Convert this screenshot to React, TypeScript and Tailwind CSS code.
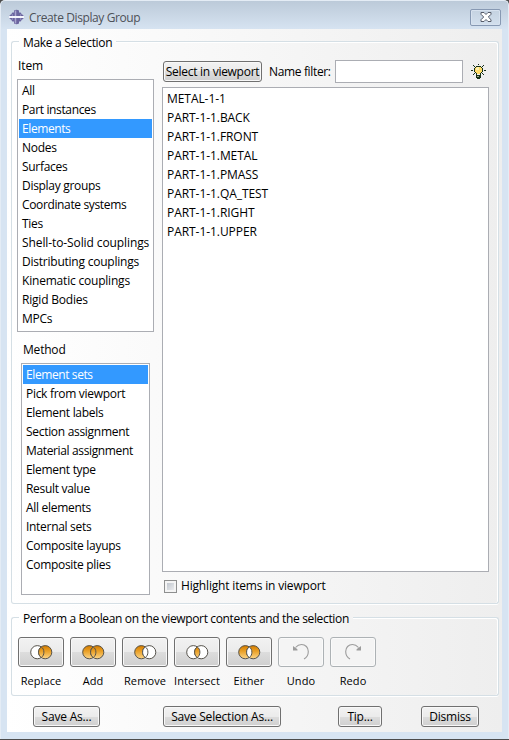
import type { ReactNode } from "react";

const items = [
  "All", "Part instances", "Elements", "Nodes", "Surfaces", "Display groups", "Coordinate systems",
  "Ties", "Shell-to-Solid couplings", "Distributing couplings", "Kinematic couplings", "Rigid Bodies", "MPCs",
];
const methods = [
  "Element sets", "Pick from viewport", "Element labels", "Section assignment", "Material assignment",
  "Element type", "Result value", "All elements", "Internal sets", "Composite layups", "Composite plies",
];
const sets = [
  "METAL-1-1", "PART-1-1.BACK", "PART-1-1.FRONT", "PART-1-1.METAL", "PART-1-1.PMASS",
  "PART-1-1.QA_TEST", "PART-1-1.RIGHT", "PART-1-1.UPPER",
];

const tracking: Record<string, string> = {
  "Shell-to-Solid couplings": "tracking-[-0.1px]",
  "Kinematic couplings": "tracking-[-0.2px]",
  "Distributing couplings": "tracking-[-0.23px]",
  "Coordinate systems": "tracking-[-0.36px]",
  "Material assignment": "tracking-[-0.36px]",
  "Part instances": "tracking-[-0.36px]",
  "Elements": "tracking-[-0.4px]",
  "Element sets": "tracking-[-0.4px]",
  "Rigid Bodies": "tracking-[-0.2px]",
};

function List({ rows, selected, className }: { rows: string[]; selected?: string; className: string }) {
  return (
    <ul className={`border border-[#abadb3] bg-white p-px ${className}`}>
      {rows.map((r) => (
        <li
          key={r}
          className={`h-[19px] whitespace-nowrap pl-[3px] leading-[19px] ${tracking[r] ?? ""} ${r === selected ? "bg-[#3399ff] text-white" : ""}`}
        >
          {r}
        </li>
      ))}
    </ul>
  );
}

function Group({ title, className, titleClass, children }: { title: string; className: string; titleClass: string; children: ReactNode }) {
  return (
    <section className={`flex w-[488px] flex-col ${className}`}>
      <div className="flex h-[6px] shrink-0">
        <div className="w-[8px] rounded-tl-[3px] border-l border-t border-[#d5dfe5] shadow-[inset_1px_1px_0_#fff]" />
        <h2 className={`-mt-[7px] h-[17px] shrink-0 whitespace-nowrap pl-1 leading-[17px] ${titleClass}`}>{title}</h2>
        <div className="flex-1 rounded-tr-[3px] border-r border-t border-[#d5dfe5] shadow-[inset_-1px_1px_0_#fff]" />
      </div>
      <div className="min-h-0 flex-1 rounded-b-[3px] border-x border-b border-[#d5dfe5] shadow-[inset_1px_0_0_#fff,inset_-1px_0_0_#fff,0_1px_0_#fff]">
        {children}
      </div>
    </section>
  );
}

const face =
  "rounded-[3px] border border-[#707070] bg-[linear-gradient(#f2f2f2,#ebebeb_50%,#dddddd_50%,#cfcfcf)] shadow-[inset_0_0_0_1px_#f8f8f8]";

function Button({ children, className }: { children: ReactNode; className: string }) {
  return (
    <button className={`flex h-[21px] items-center justify-center whitespace-nowrap ${face} ${className}`}>
      {children}
    </button>
  );
}

type Fill = { left?: boolean; mid?: boolean; right?: boolean };

function Venn({ left, mid, right }: Fill) {
  const lens = "M11.300 2C9.500 3 8.600 5 8.600 7.200S9.500 11.400 11.300 12.500C13 11.400 13.900 9.400 13.900 7.200S13 3 11.300 2Z";
  return (
    <svg width="23" height="15" viewBox="0 0 23 15" fill="none" stroke="#55524b">
      <defs>
        <linearGradient id="amber" gradientUnits="userSpaceOnUse" x1="0" y1="0" x2="0" y2="15">
          <stop offset="0.1" stopColor="#d98100" />
          <stop offset="0.45" stopColor="#eba42e" />
          <stop offset="1" stopColor="#ffdf9a" />
        </linearGradient>
      </defs>
      <ellipse cx="7.3" cy="7.2" rx="6.6" ry="6.600" fill={left ? "url(#amber)" : "#fff"} />
      <ellipse cx="15.2" cy="7.2" rx="6.6" ry="6.600" fill={right ? "url(#amber)" : "#fff"} />
      <path d={lens} fill={mid ? "url(#amber)" : "#fff"} />
    </svg>
  );
}

const operations: { name: string; fill: Fill }[] = [
  { name: "Replace", fill: { mid: true, right: true } },
  { name: "Add", fill: { left: true, mid: true, right: true } },
  { name: "Remove", fill: { left: true } },
  { name: "Intersect", fill: { mid: true } },
  { name: "Either", fill: { left: true, right: true } },
];

function Arrow({ flip }: { flip?: boolean }) {
  return (
    <svg width="18" height="18" viewBox="0 0 18 18" fill="none" className={flip ? "-scale-x-100" : ""}>
      <path d="M3.500 4.500C5.500 2.200 7.500 1.500 9.500 1.500c4 0 6.800 3 6.800 7 0 3.400-1.800 6.200-4.300 7.600" stroke="#9c9c9c" strokeWidth="1.100" />
      <path d="M1 3v4.500h4.500V6.500L4.500 5.500 3 4.500Z" fill="#9c9c9c" />
    </svg>
  );
}

function Bulb() {
  return (
    <svg width="16" height="16" viewBox="0 0 16 16" shapeRendering="crispEdges">
      <path d="M5 3h5v1h1v4h-1v2H5V8H4V4h1Z" fill="#ffdc68" />
      <path d="M6 3h2v3H5V4h1Z" fill="#fff0b0" />
      <path d="M5 2h5v1H5zM4 3h1v1H4zM10 3h1v1h-1zM3 4h1v4H3zM11 4h1v4h-1zM4 8h1v1H4zM10 8h1v1h-1zM5 9h1v2H5zM9 9h1v2H9zM5 11h5v1H5zM5 12h5v2H5zM6 14h3v1H6zM7 0h1v1H7zM2 1h1v1H2zM3 2h1v1H3zM12 1h1v1h-1zM11 2h1v1h-1zM0 6h2v1H0zM13 6h2v1h-2zM2 10h1v1H2zM3 9h1v1H3zM12 10h1v1h-1zM11 9h1v1h-1z" fill="#162f16" />
      <path d="M6 12h2v1H6z" fill="#a5ad8d" />
    </svg>
  );
}

function AppIcon() {
  return (
    <svg width="15" height="16" viewBox="0 0 15 16">
      <path d="M5 1.500Q7.500 0 10 1.500V3.500h1.500Q12.500 4 12.500 5.300Q14.500 5.500 15 8Q14.500 10.500 12.500 10.700Q12.500 12 11.500 12.500H10V14.500Q7.500 16 5 14.500V12.500H3.500Q2.500 12 2.500 10.700Q.5 10.500 0 8Q.5 5.500 2.500 5.300Q2.500 4 3.500 3.500H5Z" fill="#6a649f" />
      <path d="M6.500 1.500v13" stroke="#aaa5cf" strokeWidth="1.500" />
      <path d="M3.500 5v6M11.500 5v6" stroke="#8b86b9" />
      <path d="M0 7h15v2H0z" fill="#f4f4fc" />
    </svg>
  );
}

export default function App() {
  return (
    <div className="h-[740px] w-[509px] overflow-hidden bg-[#4c4c4c] font-['Open_Sans','Noto_Sans',sans-serif] text-[12px] tracking-[-0.3px] text-black">
      <main className="flex h-[739px] flex-col rounded-t-[5px] border-x border-t border-[#e4ecf5] bg-[#d7e4f2] bg-[linear-gradient(#bccad9,#d7e4f2_29px)] px-[6px]">
        <header className="flex h-[28px] shrink-0 items-center pl-[2px] pt-[4px]">
          <AppIcon />
          <h1 className="ml-[5px] flex-1 pt-[2px] text-[12px] leading-[20px] tracking-[-0.4px] text-[#4d5158]">Create Display Group</h1>
          <button className="mr-[1px] flex h-[17px] w-[31px] items-center justify-center rounded-[2px] border border-[#8799b3] shadow-[inset_0_0_0_1px_#d7e2ef]">
            <svg width="12" height="10" viewBox="0 0 12 10">
              <path d="M1 .5h3l2 2 2-2h3v1.800L8.300 5 11 7.700v1.800H8l-2-2-2 2H1V7.700L3.700 5 1 2.300Z" fill="#fff" stroke="#555b69" />
            </svg>
          </button>
        </header>
        <div className="h-[703px] shrink-0 bg-[linear-gradient(to_right,#ffffff,#eeeeee)] px-1 pt-3">
          <Group title="Make a Selection" className="h-[563px]" titleClass="w-[97px]">
            <div className="flex">
              <div className="w-[150px] shrink-0 pl-[5px] pt-[10px]">
                <h3 className="h-[17px] pl-[1px] leading-[17px] tracking-[-0.1px]">Item</h3>
                <List rows={items} selected="Elements" className="mt-[5px] h-[253px] w-[137px]" />
                <h3 className="mt-[9px] h-[17px] pl-[6px] leading-[17px] tracking-[-0.2px]">Method</h3>
                <List rows={methods} selected="Element sets" className="ml-[4px] mt-[5px] h-[232px] w-[129px]" />
              </div>
              <div className="w-[328px] pt-[13px]">
                <div className="flex h-[23px] items-center">
                  <Button className="ml-px w-[99px] tracking-[-0.28px]">Select in viewport</Button>
                  <label className="ml-[7px] w-[66px] whitespace-nowrap tracking-[-0.35px]" htmlFor="filter">Name filter:</label>
                  <input id="filter" className="h-[23px] w-[128px] border border-[#abadb3] bg-white" />
                  <div className="ml-[8px]"><Bulb /></div>
                </div>
                <List rows={sets} className="mt-[4px] h-[485px] w-[327px] tracking-[-0.06px]" />
                <div className="mt-[5px] flex h-[18px] items-center pl-[2px]">
                  <span className="h-[13px] w-[13px] border border-[#8e8f8f] bg-[linear-gradient(135deg,#b5bcc6,#f6f6f6)] shadow-[inset_0_0_0_2px_#f4f4f4]" />
                  <span className="ml-[4px] tracking-[-0.18px]">Highlight items in viewport</span>
                </div>
              </div>
            </div>
          </Group>
          <Group
            title="Perform a Boolean on the viewport contents and the selection"
            className="mt-[13px] h-[79px]"
            titleClass="w-[334px] tracking-[-0.35px]"
          >
            <div className="flex gap-[6px] pl-[6px] pt-[14px]">
              {operations.map((o) => (
                <div key={o.name} className="flex w-[46px] flex-col items-center">
                  <button className={`flex h-[30px] w-[46px] items-center justify-center ${face}`}>
                    <Venn {...o.fill} />
                  </button>
                  <span className="mt-[5px] h-[17px] whitespace-nowrap text-[11px] leading-[17px] tracking-[0.1px]">{o.name}</span>
                </div>
              ))}
              {["Undo", "Redo"].map((n) => (
                <div key={n} className="flex w-[46px] flex-col items-center">
                  <button className="flex h-[30px] w-[46px] items-center justify-center rounded-[3px] border border-[#adb2b5] bg-[#f4f4f4] shadow-[inset_0_0_0_1px_#fafafa]">
                    <Arrow flip={n === "Redo"} />
                  </button>
                  <span className="mt-[5px] h-[17px] text-[11px] leading-[17px] tracking-[0.1px]">{n}</span>
                </div>
              ))}
            </div>
          </Group>
          <footer className="mt-[10px] flex pl-[22px] tracking-[-0.2px]">
            <Button className="w-[67px]">Save As...</Button>
            <Button className="ml-[63px] w-[118px]">Save Selection As...</Button>
            <Button className="ml-[57px] w-[44px]">Tip...</Button>
            <Button className="ml-[39px] w-[58px]">Dismiss</Button>
          </footer>
        </div>
      </main>
    </div>
  );
}
